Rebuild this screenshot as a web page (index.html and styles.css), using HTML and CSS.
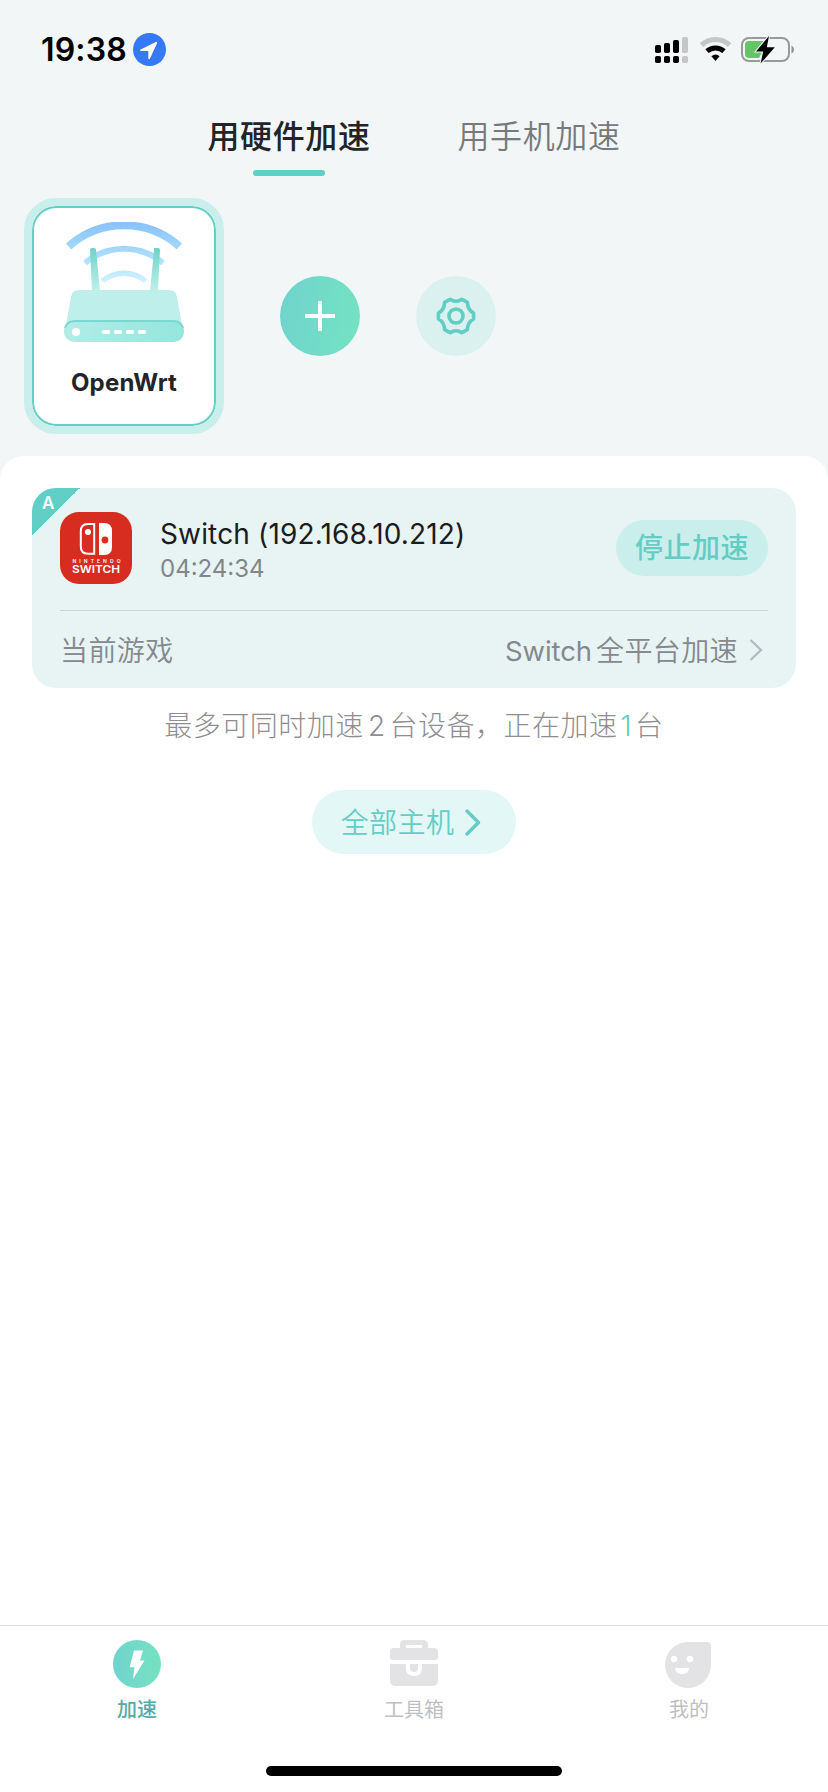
FILE: index.html
```
<!DOCTYPE html>
<html lang="zh-CN">
<head>
<meta charset="utf-8">
<meta name="viewport" content="width=828">
<title>加速</title>
<link rel="stylesheet" href="styles.css">
</head>
<body>
<div class="app">
  <header class="status">
    <span class="clock">19:38</span>
    <svg class="location" width="33" height="33" viewBox="0 0 33 33"><circle cx="16.5" cy="16.5" r="16.5" fill="#3579f6"/><path d="M8 17.2 23.2 9.8 16.2 25.2V17.2Z" fill="#fff" stroke="#fff" stroke-width="1.8" stroke-linejoin="round"/></svg>
    <svg class="signals" width="140" height="28" viewBox="0 0 140 28">
      <g fill="#000"><rect y="9" width="6" height="8" rx="1.8"/><rect x="9" y="7" width="6" height="10" rx="1.8"/><rect x="18" y="4" width="6" height="13" rx="1.8"/><rect y="20" width="6" height="7" rx="1.8"/><rect x="9" y="20" width="6" height="7" rx="1.8"/><rect x="18" y="20" width="6" height="7" rx="1.8"/></g>
      <g fill="#c4c7c8"><rect x="27" y="1" width="6" height="16" rx="1.8"/><rect x="27" y="20" width="6" height="7" rx="1.8"/></g>
      <g fill="none" stroke-width="5"><path d="M46.5 9.1A20 20 0 0 1 74.5 9.1" stroke="#c4c7c8"/><path d="M52 15.2A12.6 12.6 0 0 1 69 15.2" stroke="#000"/></g>
      <path d="M56.4 20.2Q60.5 17 64.6 20.2L60.5 25Z" fill="#000"/>
      <rect x="87" y="2" width="47" height="23" rx="7" fill="none" stroke="#97999b" stroke-width="2"/>
      <path d="M94 5H109L102 14 107 16 104 22H94Q90 22 90 18V9Q90 5 94 5Z" fill="#65c466"/>
      <path d="M136.5 9.5Q139 11 139 13.5T136.5 17.5Z" fill="#8d8f91"/>
      <path d="M114 0 101 15.4H108.2L105.6 27.5 119.8 11.2H111.8Z" fill="#000" stroke="#f2f6f7" stroke-width="2" paint-order="stroke"/>
    </svg>
  </header>

  <nav class="modes">
    <a class="mode mode-active">用硬件加速</a>
    <a class="mode">用手机加速</a>
  </nav>

  <section class="devices">
    <div class="router">
      <svg width="120" height="122" viewBox="0 0 120 122">
        <defs>
          <linearGradient id="sky" gradientUnits="userSpaceOnUse" x1="0" y1="0" x2="0" y2="60"><stop offset="0" stop-color="#88c1fb"/><stop offset=".6" stop-color="#ace0fc"/><stop offset="1" stop-color="#d0f1ff"/></linearGradient>
          <linearGradient id="antenna" x1="0" y1="0" x2="0" y2="1"><stop offset="0" stop-color="#6fd2c8"/><stop offset="1" stop-color="#bff0eb"/></linearGradient>
          <linearGradient id="front" x1="0" y1="0" x2="1" y2="0"><stop offset="0" stop-color="#b3ece7"/><stop offset="1" stop-color="#94e6dd"/></linearGradient>
        </defs>
        <g fill="none" stroke="url(#sky)">
          <path d="M4.600 24.500C36-3.700 84-3.700 115.400 24.500" stroke-width="8"/>
          <path d="M21 41C44 22 76 22 99 41" stroke-width="6"/>
          <path d="M38.300 59C51 48.500 69 48.500 81.700 59" stroke-width="5.500"/>
        </g>
        <path d="M26 28Q26 26 28 26H30Q32 26 32 28L36 69H28Z" fill="url(#antenna)"/>
        <path d="M94 26H90Q90 26 90 28L86 69H94L96 28Q96 26 94 26Z" fill="url(#antenna)"/>
        <path d="M15 68H105Q112 68 113 75L118 103H2L7 75Q8 68 15 68Z" fill="#bfefeb"/>
        <rect y="98" width="120" height="22" rx="10" fill="url(#front)"/>
        <path d="M1 106Q3 99 11 99H109Q117 99 119 106" fill="none" stroke="#79d9d1" stroke-width="2"/>
        <circle cx="12" cy="110" r="4" fill="#fff"/>
        <g fill="#fff"><rect x="38" y="108" width="8" height="4" rx="1.5"/><rect x="50" y="108" width="8" height="4" rx="1.5"/><rect x="62" y="108" width="8" height="4" rx="1.5"/><rect x="74" y="108" width="8" height="4" rx="1.5"/></g>
      </svg>
      <span class="router-name">OpenWrt</span>
    </div>
    <button class="round round-add" aria-label="添加"><svg width="30" height="30" viewBox="0 0 30 30"><path d="M15 0V30M0 15H30" stroke="#fff" stroke-width="4"/></svg></button>
    <button class="round round-set" aria-label="设置"><svg width="40" height="40" viewBox="0 0 40 40"><g fill="none" stroke="#62cdc3" stroke-width="3.6" stroke-linejoin="round"><circle cx="20" cy="20" r="7"/><path d="M14 3.4Q20 7 26 3.4L31.4 6.4Q31.6 14 37.6 17V23Q31.6 26 31.4 33.6L26 36.6Q20 33 14 36.6L8.6 33.6Q8.4 26 2.4 23V17Q8.4 14 8.6 6.4Z"/></g></svg></button>
  </section>

  <main class="sheet">
    <article class="card">
      <div class="corner"><span>A</span></div>
      <div class="host">
        <svg class="logo" width="72" height="72" viewBox="0 0 72 72">
          <rect width="72" height="72" rx="19" fill="#d62d20"/>
          <path d="M34.2 12V41.7H28Q20.8 41.7 20.8 34.5V19.2Q20.8 12 28 12Z" fill="none" stroke="#fff" stroke-width="2"/>
          <circle cx="28" cy="20" r="3" fill="#fff"/>
          <path d="M39 11H44Q52 11 52 19V35Q52 43 44 43H39Z" fill="#fff"/>
          <circle cx="45" cy="28" r="3.4" fill="#d62d20"/>
          <text class="logo-small" x="12.5" y="51" textLength="48">NINTENDO</text>
          <text class="logo-big" x="12" y="61" textLength="48" lengthAdjust="spacingAndGlyphs">SWITCH</text>
        </svg>
        <div class="host-info">
          <div class="host-name">Switch (192.168.10.212)</div>
          <div class="host-time">04:24:34</div>
        </div>
        <button class="stop">停止加速</button>
      </div>
      <div class="game">
        <span class="game-label">当前游戏</span>
        <span class="game-value"><span class="game-latin">Switch</span>全平台加速</span>
        <svg class="game-arrow" width="14" height="22" viewBox="0 0 14 22"><path d="M1.5 1 12 11 1.5 21" fill="none" stroke="#b3bcbe" stroke-width="2.4"/></svg>
      </div>
    </article>
    <p class="hint">最多可同时加速<span class="num">2</span>台设备，正在加速<span class="num num-on">1</span>台</p>
    <button class="all"><span>全部主机</span><svg width="16" height="27" viewBox="0 0 16 27"><path d="M2 2 13.5 13.5 2 25" fill="none" stroke="#64cec5" stroke-width="3.4" stroke-linecap="round" stroke-linejoin="round"/></svg></button>
  </main>

  <footer class="tabbar">
    <a class="tab tab-active">
      <svg width="48" height="48" viewBox="0 0 48 48"><defs><linearGradient id="mint"><stop offset="0" stop-color="#72d3d0"/><stop offset="1" stop-color="#75e2c0"/></linearGradient></defs><circle cx="24" cy="24" r="24" fill="url(#mint)"/><path d="M21 10.5H30L27 20.5H31.5L20 39 21.5 27.3H16.7Z" fill="#fff"/></svg>
      <span>加速</span>
    </a>
    <a class="tab">
      <svg width="48" height="48" viewBox="0 0 48 48"><g fill="#e3e3e5"><path fill-rule="evenodd" d="M15 0H33Q38 0 38 5V8H44Q48 8 48 12V17Q48 20 45 20H3Q0 20 0 17V12Q0 8 4 8H10V5Q10 0 15 0ZM16 5V8H32V5Z"/><path d="M0 24H16V28Q16 36 24 36T32 28V24H48V40Q48 46 42 46H6Q0 46 0 40Z"/><path d="M20 24H28V28Q28 32 24 32T20 28Z"/></g></svg>
      <span>工具箱</span>
    </a>
    <a class="tab">
      <svg width="48" height="48" viewBox="0 0 48 48"><path d="M23 2H42Q46 2 46 6V25A23 23 0 1 1 23 2Z" fill="#e3e3e5"/><g fill="#fff"><circle cx="9" cy="19" r="3.2"/><circle cx="25" cy="19" r="3.2"/><path d="M10 28H24A7 6.2 0 0 1 10 28Z"/></g></svg>
      <span>我的</span>
    </a>
    <div class="home"></div>
  </footer>
</div>
</body>
</html>
```
FILE: styles.css
```
* { box-sizing: border-box; }
body { margin: 0; background: #fff; }
button { border: 0; padding: 0; margin: 0; font: inherit; }
.app {
  width: 828px; height: 1792px; display: flex; flex-direction: column;
  background: #f2f6f7; overflow: hidden;
  font-family: Inter, "Noto Sans CJK SC", sans-serif;
}
svg { display: block; flex: none; }

.status { height: 100px; padding: 32px 33px 0 41px; display: flex; align-items: flex-start; }
.clock { width: 92px; font-size: 32px; font-weight: 600; line-height: 36px; letter-spacing: 0.15px; color: #000; white-space: nowrap; }
.location { margin-top: 1px; }
.signals { margin: 4px 0 0 auto; }

.modes { height: 98px; padding: 10px 207px 0 207px; display: flex; justify-content: space-between; }
.mode {
  width: 164px; height: 66px; display: flex; flex-direction: column; align-items: center;
  font-size: 32px; letter-spacing: 0.6px; line-height: 54px; font-weight: 350; color: #77797b; white-space: nowrap;
}
.mode-active { font-weight: 500; color: #222427; }
.mode-active::after { content: ""; width: 72px; height: 6px; margin-top: 6px; border-radius: 3px; background: #61cfc5; }

.devices { height: 258px; padding-left: 24px; display: flex; align-items: flex-start; }
.router {
  width: 200px; height: 236px; padding-top: 16px; border: 8px solid #caeeeb; border-radius: 32px;
  display: flex; flex-direction: column; align-items: center; background: #fff; box-shadow: inset 0 0 0 2px #62cdc3;
}
.router-name { margin-top: 24px; font-size: 24px; line-height: 30px; font-weight: 650; letter-spacing: 0.2px; color: #222427; }
.round { width: 80px; height: 80px; margin: 78px 0 0 56px; border-radius: 50%; display: flex; align-items: center; justify-content: center; }
.round-add { background: linear-gradient(100deg, #70d3ce, #74e3c1); }
.round-set { background: #dbf1ef; }

.sheet {
  flex: 1; padding: 32px 32px 0; border-radius: 24px 24px 0 0; background: #fff;
  display: flex; flex-direction: column; align-items: center;
}
.card { width: 764px; height: 200px; padding: 24px 28px 0; position: relative; border-radius: 24px; overflow: hidden; background: #e8f4f4; }
.corner { position: absolute; left: 0; top: 0; width: 48px; height: 48px; background: linear-gradient(135deg, #61cfc5 50%, transparent 50%); }
.corner span { display: block; padding: 5px 0 0 10px; font-size: 17px; line-height: 20px; font-weight: 600; color: #fff; }
.host { height: 98px; display: flex; align-items: flex-start; position: relative; }
.logo-small { font: 600 5px Inter, sans-serif; fill: #fff; }
.logo-big { font: 600 10.5px Inter, sans-serif; fill: #fff; }
.host-info { flex: 1; padding: 5px 0 0 28px; }
.host-name { font-size: 28px; line-height: 35px; color: #191d21; letter-spacing: 0.15px; white-space: nowrap; }
.host-time { font-size: 24px; line-height: 28px; margin-top: 3px; font-weight: 400; color: #808789; }
.stop { width: 152px; height: 56px; margin-top: 8px; border-radius: 28px; background: #caeeeb; color: #63cdc4; font-size: 28px; font-weight: 500; letter-spacing: 0.5px; line-height: 55px; }
.game { height: 78px; padding-bottom: 2px; border-top: 1px solid #c8d5d6; display: flex; align-items: center; color: #84898d; font-size: 28px; font-weight: 350; }
.game-label { flex: 1; letter-spacing: 0.4px; }
.game-value { margin-right: 11px; letter-spacing: 0.4px; white-space: nowrap; }
.game-latin { margin-right: 4px; font-size: 27.5px; font-weight: 400; letter-spacing: -0.1px; }
.game-arrow { margin: 2px 5px 0 0; }

.hint { margin: 17px 0 0; font-size: 28px; line-height: 42px; letter-spacing: 0.5px; font-weight: 300; color: #8e8e92; white-space: nowrap; }
.num { margin: 0 4px; }
.num-on { color: #61cfc5; margin: 0 3px; }
.all {
  width: 204px; height: 64px; margin-top: 43px; padding-right: 6px; border-radius: 32px; background: #e3f7f6; color: #64cec5;
  display: flex; align-items: center; justify-content: center; gap: 11px; font-size: 28px; font-weight: 350; letter-spacing: 0.4px;
}
.all span { margin-top: -3px; }

.tabbar { height: 167px; padding-top: 14px; border-top: 1px solid #e0e0e2; background: #fff; display: grid; grid-template-columns: 274px 280px 270px; grid-template-rows: 126px 10px; justify-items: center; }
.tab { display: flex; flex-direction: column; align-items: center; font-size: 20px; line-height: 30px; color: #bebfc3; }
.tab span { margin-top: 7px; }
.tab-active { color: #55aaa8; font-weight: 500; }
.home { grid-column: 1 / -1; width: 296px; height: 10px; margin-left: 4px; border-radius: 5px; background: #000; }
```
